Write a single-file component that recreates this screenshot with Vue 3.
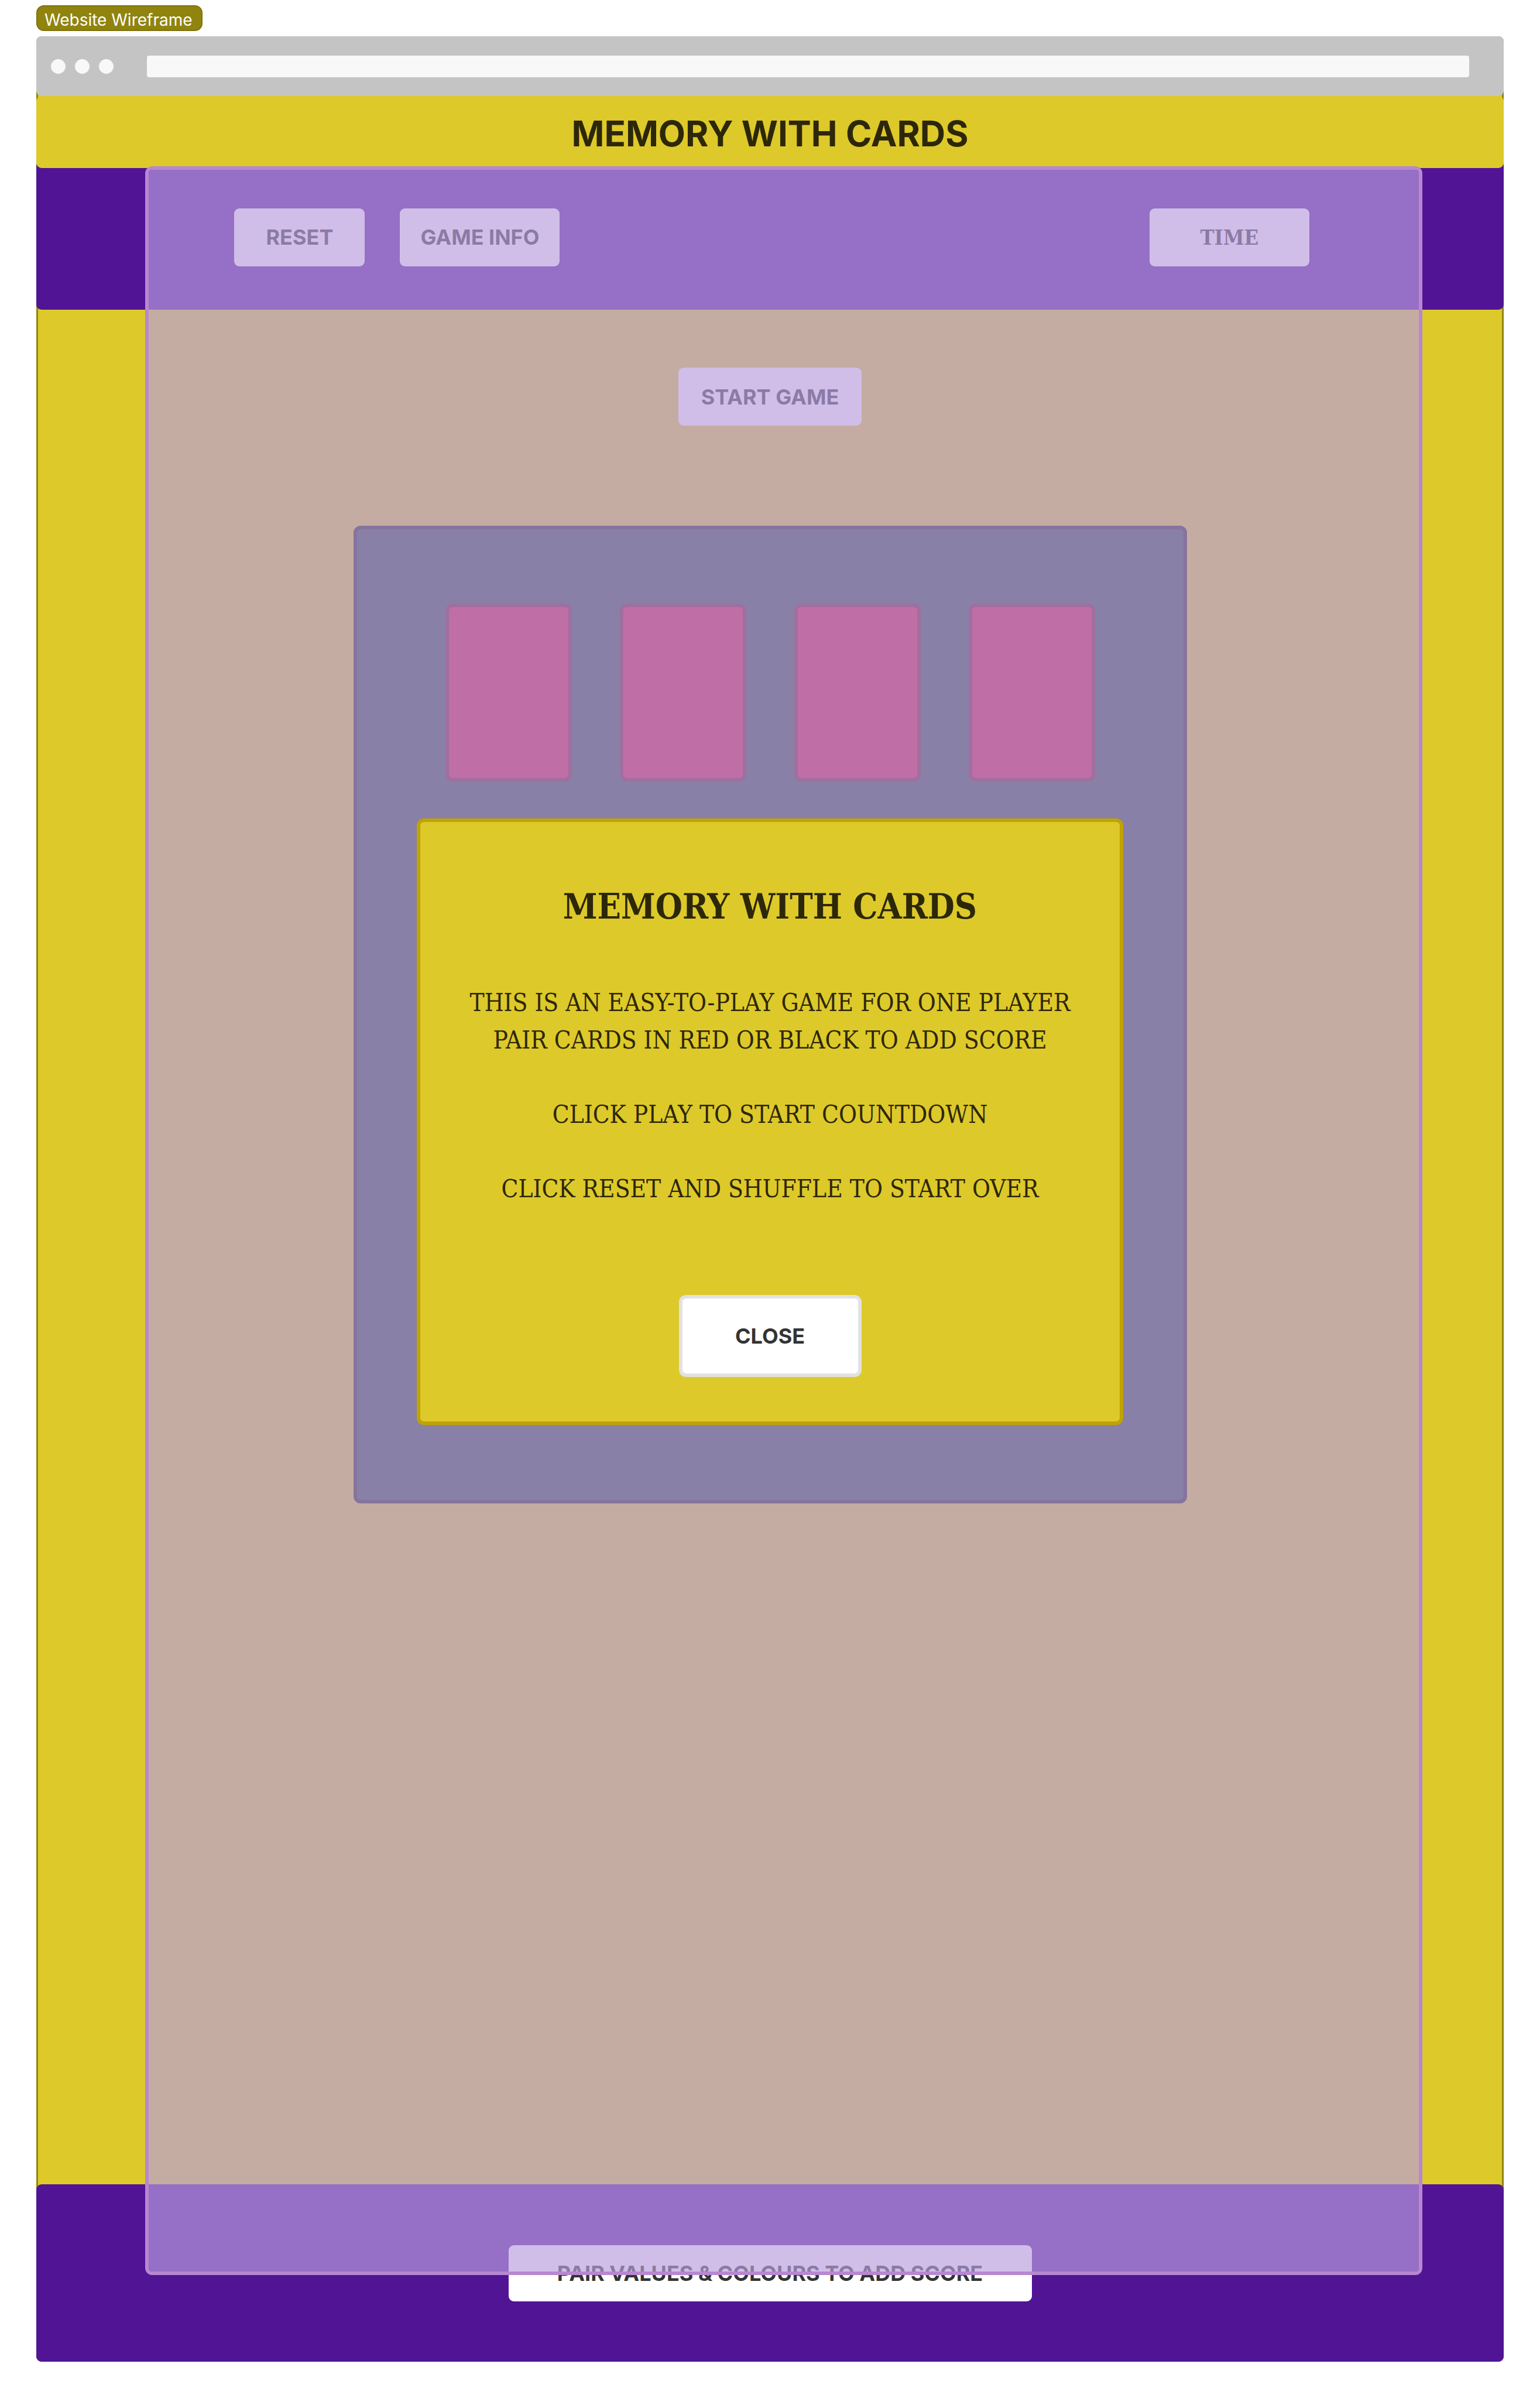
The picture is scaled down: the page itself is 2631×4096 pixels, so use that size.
<script setup>
import { ref } from 'vue'

const cards = [1, 2, 3, 4]
const showInfo = ref(true)
</script>

<template>
  <div class="canvas">
    <div class="frame-label">Website Wireframe</div>

    <div class="browser">
      <div class="chrome">
        <div class="dots"><span></span><span></span><span></span></div>
        <input class="address" type="text" aria-label="Address" />
      </div>

      <header class="title-bar">
        <h1>MEMORY WITH CARDS</h1>
      </header>

      <nav class="toolbar">
        <div class="actions">
          <button class="btn reset" type="button">RESET</button>
          <button class="btn wide" type="button" @click="showInfo = true">GAME INFO</button>
        </div>
        <div class="btn wide time">TIME</div>
      </nav>

      <main class="stage">
        <button class="btn start" type="button">START GAME</button>
        <section class="board">
          <div v-for="card in cards" :key="card" class="card"></div>
        </section>
      </main>

      <footer class="footer">
        <div class="btn hint">PAIR VALUES &amp; COLOURS TO ADD SCORE</div>
      </footer>

      <template v-if="showInfo">
        <div class="overlay"></div>
        <section class="modal" role="dialog" aria-labelledby="info-title">
          <h2 id="info-title">MEMORY WITH CARDS</h2>
          <div class="rules">
            <p>THIS IS AN EASY-TO-PLAY GAME FOR ONE PLAYER<br />PAIR CARDS IN RED OR BLACK TO ADD SCORE</p>
            <p>CLICK PLAY TO START COUNTDOWN</p>
            <p>CLICK RESET AND SHUFFLE TO START OVER</p>
          </div>
          <button class="btn close" type="button" @click="showInfo = false">CLOSE</button>
        </section>
      </template>
    </div>
  </div>
</template>

<style>
body {
  margin: 0;
  background: #ffffff;
}
</style>

<style scoped>
.canvas {
  box-sizing: border-box;
  min-height: 100vh;
  padding: 9px 62px 62px;
  display: flex;
  flex-direction: column;
  align-items: flex-start;
  gap: 9px;
  font-family: Inter, "Liberation Sans", sans-serif;
}

.canvas * {
  box-sizing: border-box;
}

.frame-label {
  height: 44px;
  padding: 4px 15px 0 12px;
  border: 2px solid #7d720c;
  border-radius: 13px;
  background: #90840f;
  color: #ffffff;
  font-size: 28px;
  line-height: 38px;
  white-space: nowrap;
}

.browser {
  position: relative;
  align-self: stretch;
  flex: 1;
  display: flex;
  flex-direction: column;
  border-radius: 9px;
  background: #ddc92a;
  box-shadow: inset 0 0 0 3px #90840f;
}

.chrome {
  height: 102px;
  padding: 0 59px 0 25px;
  display: flex;
  align-items: center;
  gap: 57px;
  border-radius: 9px;
  background: #c4c4c4;
}

.dots {
  display: flex;
  gap: 16px;
}

.dots span {
  width: 25px;
  height: 25px;
  border-radius: 50%;
  background: #f8f8f8;
}

.address {
  flex: 1;
  height: 37px;
  padding: 0 12px;
  border: 0;
  border-radius: 4px;
  background: #f8f8f8;
  font: inherit;
  font-size: 24px;
}

.title-bar {
  position: relative;
  z-index: 1;
  height: 123px;
  padding-top: 4px;
  display: flex;
  align-items: center;
  justify-content: center;
  border-radius: 9px;
  background: #ddc92a;
}

h1,
h2,
p {
  margin: 0;
}

h1 {
  color: #2d270a;
  font-size: 60px;
  font-weight: 700;
  line-height: 76px;
}

.toolbar {
  height: 254px;
  margin-top: -12px;
  padding: 12px 13.25% 6px 13.5%;
  display: flex;
  align-items: center;
  justify-content: space-between;
  border-radius: 9px;
  background: #511495;
}

.actions {
  display: flex;
  gap: 60px;
}

.btn {
  height: 99px;
  padding: 0;
  display: flex;
  align-items: center;
  justify-content: center;
  border: 0;
  border-radius: 9px;
  background: #ffffff;
  color: #333333;
  font-family: inherit;
  font-size: 36px;
  font-weight: 700;
  line-height: 48px;
  white-space: nowrap;
}

.reset {
  width: 223px;
}

.wide {
  width: 273px;
}

.time {
  font-family: "DejaVu Serif Condensed", "DejaVu Serif", serif;
}

.stage {
  flex: 1;
  padding: 99px 0;
  display: flex;
  flex-direction: column;
  align-items: center;
  gap: 171px;
}

.start {
  width: 313px;
}

.board {
  width: 1424px;
  max-width: 100%;
  height: 1670px;
  padding-top: 127px;
  display: flex;
  align-items: flex-start;
  justify-content: center;
  gap: 82px;
  border: 6px solid #1e211b;
  border-radius: 12px;
  background: #274539;
}

.card {
  width: 216px;
  height: 304px;
  border: 6px solid #6f1221;
  border-radius: 12px;
  background: #cc1236;
}

.footer {
  height: 303px;
  display: flex;
  align-items: center;
  justify-content: center;
  border-radius: 9px;
  background: #511495;
}

.hint {
  width: 894px;
  height: 96px;
}

/* Dimming layer between the page and the dialog */
.overlay {
  position: absolute;
  z-index: 2;
  top: 222px;
  right: 5.56%;
  bottom: 148px;
  left: 7.42%;
  border: 6px solid #b788d0;
  border-radius: 12px;
  background: rgba(185, 157, 222, 0.667);
  background-clip: padding-box;
}

.modal {
  position: absolute;
  z-index: 3;
  top: 1336px;
  right: 0;
  left: 0;
  width: 1207px;
  max-width: 100%;
  margin: 0 auto;
  padding: 105px 0 76px;
  display: flex;
  flex-direction: column;
  align-items: center;
  border: 6px solid #c0a200;
  border-radius: 12px;
  background: #ddc92a;
  color: #2d270a;
  font-family: "DejaVu Serif Condensed", "DejaVu Serif", serif;
  text-align: center;
}

h2 {
  font-size: 59px;
  font-weight: 700;
  line-height: 80px;
}

.rules {
  margin: 92px 0 149px;
  display: flex;
  flex-direction: column;
  gap: 63px;
  font-size: 42px;
  line-height: 64px;
}

.close {
  width: 312px;
  height: 140px;
  border: 6px solid #e2e2e2;
  border-radius: 12px;
  font-family: Inter, "Liberation Sans", sans-serif;
}
</style>
